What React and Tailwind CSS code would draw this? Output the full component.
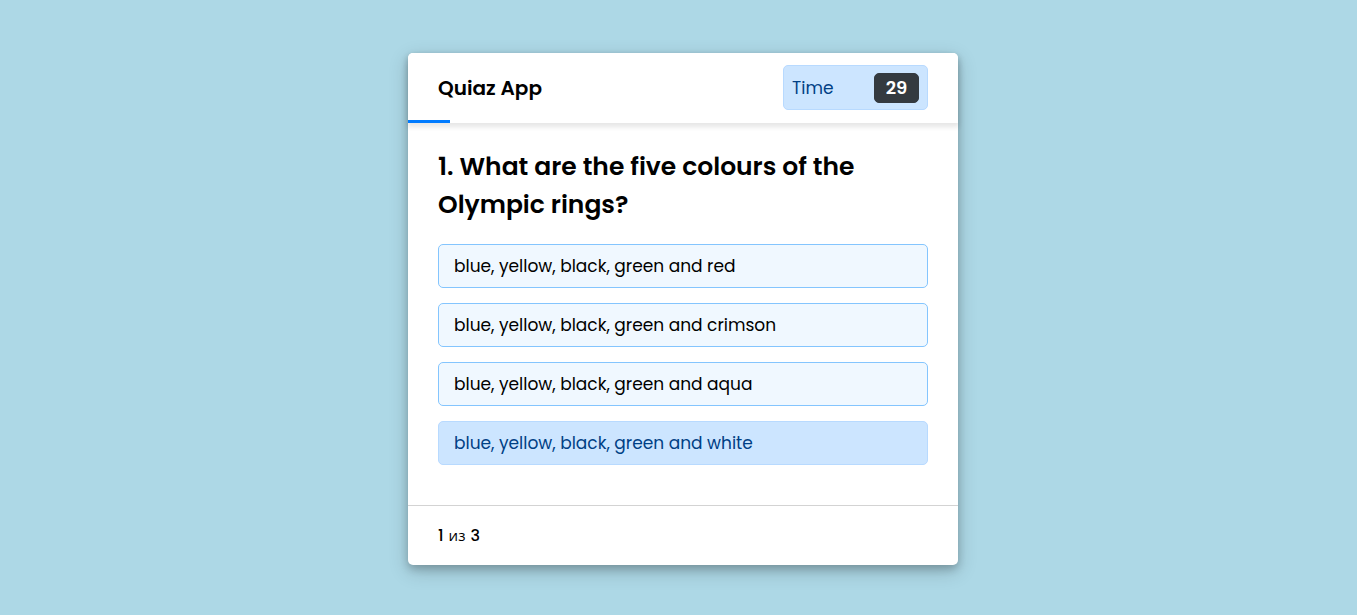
const options = [
  "blue, yellow, black, green and red",
  "blue, yellow, black, green and crimson",
  "blue, yellow, black, green and aqua",
  "blue, yellow, black, green and white",
];

function Option({ text, selected }) {
  return (
    <button
      type="button"
      aria-pressed={selected}
      className={
        selected
          ? "w-full rounded-[5px] border border-[#b8daff] bg-[#cce5ff] px-[15px] py-2 text-left text-[#004085]"
          : "w-full rounded-[5px] border border-[#84c5fe] bg-[aliceblue] px-[15px] py-2 text-left text-black"
      }
    >
      {text}
    </button>
  );
}

export default function App() {
  return (
    <div className="flex min-h-screen items-center justify-center bg-[#add8e6] pt-[51px] pb-12 pl-[9px] font-['Poppins','Inter',sans-serif] text-black">
      <main className="w-full max-w-[550px] rounded-[5px] bg-white shadow-[0_4px_8px_rgba(0,0,0,0.2),0_6px_20px_rgba(0,0,0,0.19)]">
        <header className="relative flex items-center justify-between rounded-t-[5px] bg-white px-[30px] pt-3 pb-[13px] shadow-[0_3px_5px_1px_rgba(0,0,0,0.1)]">
          <h1 className="text-xl font-semibold">Quiaz App</h1>
          <div className="flex h-[45px] w-[145px] items-center justify-between rounded-[5px] border border-[#b8daff] bg-[#cce5ff] px-2">
            <span className="text-[17px] leading-[26px] text-[#004085]">Time</span>
            <span className="flex h-[30px] w-[45px] items-center justify-center rounded-[5px] border border-[#343a40] bg-[#343a40] text-lg font-semibold text-white">
              29
            </span>
          </div>
          <div className="absolute bottom-0 left-0 h-[3px] w-[42px] bg-[#007bff]" />
        </header>
        <section className="px-[30px] pt-[25px] pb-10">
          <h2 className="text-[25px] leading-[38px] font-semibold">
            1. What are the five colours of the Olympic rings?
          </h2>
          <div className="mt-5 flex flex-col gap-[15px] text-[17px] leading-[26px]">
            {options.map((text, i) => (
              <Option key={text} text={text} selected={i === 3} />
            ))}
          </div>
        </section>
        <footer className="flex h-[60px] items-center border-t border-[lightgrey] px-[30px]">
          <p className="flex items-baseline gap-[5px] font-medium">
            <span>1</span>
            <span className="font-['Open_Sans','Noto_Sans',sans-serif] text-[15px] font-normal">из</span>
            <span>3</span>
          </p>
        </footer>
      </main>
    </div>
  );
}
